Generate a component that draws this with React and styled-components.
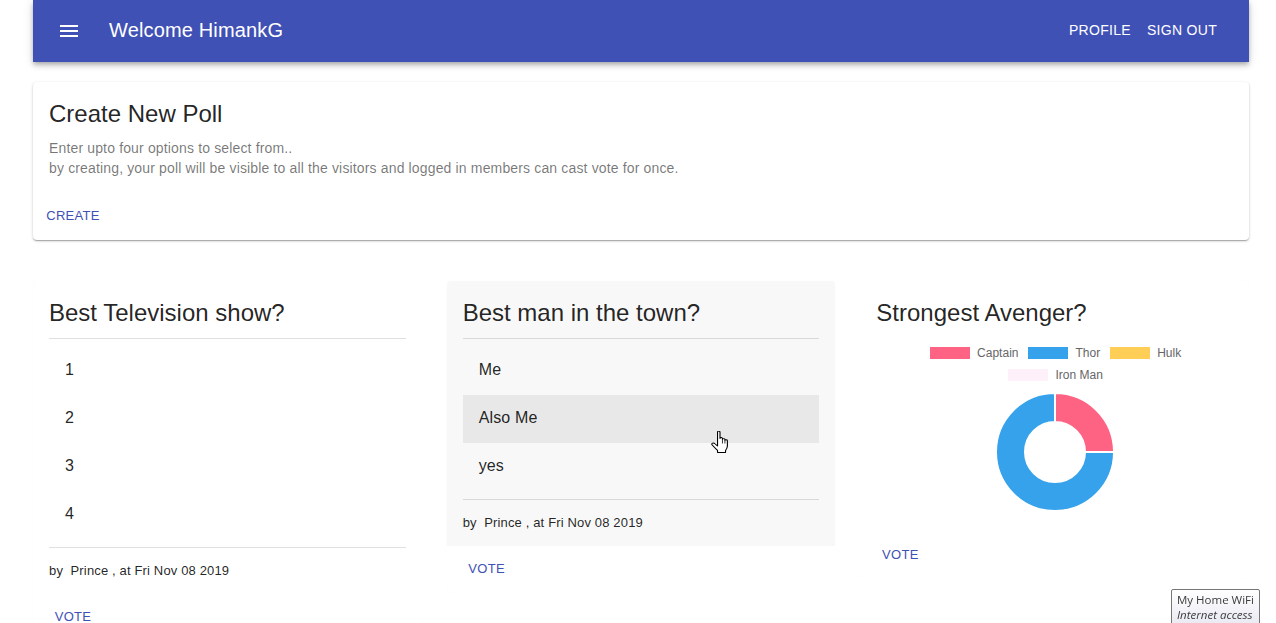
import React from 'react';
import styled, { createGlobalStyle } from 'styled-components';

const GlobalStyle = createGlobalStyle`
  html, body {
    margin: 0;
    padding: 0;
    overflow: hidden;
    background: #fff;
    font-family: "Liberation Sans", Arial, sans-serif;
    color: rgba(0, 0, 0, 0.87);
  }
  * { box-sizing: border-box; }
`;

const Page = styled.div`
  width: 1216px;
  margin-left: 33px;
`;

const AppBar = styled.header`
  height: 62px;
  background: #3f51b5;
  color: #fff;
  display: flex;
  align-items: center;
  padding: 0 24px;
  box-shadow: 0px 2px 4px -1px rgba(0,0,0,0.2), 0px 4px 5px 0px rgba(0,0,0,0.14), 0px 1px 10px 0px rgba(0,0,0,0.12);
  position: relative;
  z-index: 2;
`;

const MenuButton = styled.button`
  border: 0;
  background: none;
  color: inherit;
  padding: 0;
  margin-right: 28px;
  width: 24px;
  height: 24px;
  display: flex;
`;

const BarTitle = styled.h1`
  margin: 0 0 2px;
  flex: 1;
  font-size: 20px;
  font-weight: 400;
  line-height: 1.6;
  letter-spacing: 0.15px;
`;

const NavButton = styled.button`
  border: 0;
  background: none;
  color: #fff;
  font-family: inherit;
  font-size: 14px;
  letter-spacing: 0.3px;
  text-transform: uppercase;
  padding: 6px 8px;
  line-height: 1.75;
  margin-bottom: 2px;
`;

const Card = styled.div`
  background: #fff;
  border-radius: 4px;
  overflow: hidden;
  box-shadow: ${(p) =>
    p.$raised
      ? '0px 1px 3px 0px rgba(0,0,0,0.2), 0px 1px 1px 0px rgba(0,0,0,0.14), 0px 2px 1px -1px rgba(0,0,0,0.12)'
      : '0 0 1px rgba(0,0,0,0.05)'};
`;

const CreateCard = styled(Card)`
  margin-top: 20px;
`;

const ActionArea = styled.div`
  background: ${(p) => (p.$hovered ? '#f8f8f8' : 'transparent')};
`;

const Content = styled.div`
  padding: 16px 16px 15px;
`;

const Title = styled.h2`
  margin: 0 0 ${(p) => (p.$gutter ? 9 : 8)}px;
  font-size: 24px;
  font-weight: 400;
  line-height: 32px;
`;

const Hint = styled.p`
  margin: 0;
  font-size: 14px;
  line-height: 20px;
  letter-spacing: 0.15px;
  color: rgba(0, 0, 0, 0.54);
`;

const Actions = styled.div`
  padding: 8px;
  display: flex;
`;

const TextButton = styled.button`
  border: 0;
  background: none;
  display: inline-flex;
  justify-content: center;
  min-width: 64px;
  padding: 4px 5px;
  font-family: inherit;
  font-size: 13px;
  line-height: 1.75;
  letter-spacing: 0.3px;
  text-transform: uppercase;
  color: #3f51b5;
`;

const PollGrid = styled.div`
  margin-top: 41px;
  display: grid;
  grid-template-columns: repeat(3, 1fr);
  column-gap: 25px;
  align-items: start;
`;

const Divider = styled.hr`
  margin: 0;
  border: 0;
  height: 1px;
  background: rgba(0, 0, 0, 0.12);
`;

const OptionList = styled.ul`
  list-style: none;
  margin: 0;
  padding: 8px 0;
`;

const Option = styled.li`
  position: relative;
  height: 48px;
  display: flex;
  align-items: center;
  padding: 0 16px 2px;
  font-size: 16px;
  letter-spacing: 0.15px;
  background: ${(p) => (p.$hovered ? '#e8e8e8' : 'transparent')};
`;

const Byline = styled.div`
  margin-top: 15px;
  font-size: 13px;
  line-height: 16px;
  letter-spacing: 0.15px;
  white-space: pre;
`;

const Chart = styled.div`
  padding: 9px 0 5px;
  display: flex;
  flex-direction: column;
  align-items: center;
`;

const Legend = styled.div`
  width: 270px;
  display: flex;
  flex-wrap: wrap;
  justify-content: center;
  column-gap: 10px;
  row-gap: 10px;
  padding-left: 2px;
`;

const LegendItem = styled.div`
  display: flex;
  align-items: center;
  font-size: 12px;
  line-height: 12px;
  color: #666;
`;

const Swatch = styled.span`
  width: 40px;
  height: 12px;
  margin-right: 7px;
  background: ${(p) => p.$color};
`;

const Donut = styled.svg`
  margin-top: 11px;
  display: block;
`;

const Cursor = styled.svg`
  position: absolute;
  left: 248px;
  top: 36px;
  z-index: 1;
`;

const WifiTip = styled.div`
  position: fixed;
  left: 1171px;
  top: 589px;
  width: 89px;
  height: 44px;
  padding: 2px 5px;
  border: 1px solid #767676;
  border-radius: 2px;
  background: linear-gradient(#ffffff, #e4e5f0);
  font-family: "Open Sans", "DejaVu Sans", sans-serif;
  font-size: 11.5px;
  line-height: 15px;
  color: #3c3c3c;
  white-space: nowrap;
  em { font-style: italic; }
`;

const MenuIcon = () => (
  <svg width="24" height="24" viewBox="0 0 24 24" fill="currentColor">
    <path d="M3 18h18v-2H3v2zm0-5h18v-2H3v2zm0-7v2h18V6H3z" />
  </svg>
);

const HandCursor = () => (
  <Cursor width="17" height="22" viewBox="0.2 0 13.8 22" preserveAspectRatio="none">
    <path
      d="M5.5 1.2C5.5 0.5 6 0.1 6.5 0.1C7.1 0.1 7.5 0.5 7.5 1.2V7.6C7.5 7 7.9 6.5 8.5 6.5C9.1 6.5 9.5 7 9.5 7.6V8.6C9.5 8 9.9 7.6 10.5 7.6C11.1 7.6 11.5 8 11.5 8.6V9.6C11.5 9.1 11.9 8.7 12.5 8.7C13.1 8.7 13.5 9.1 13.5 9.7V15C13.5 17 12.7 18.4 12 19.4V21.5H5.5V19.4C4.5 18.4 2.6 16 1.2 14.1C0.6 13.3 0.8 12.4 1.5 12.1C2.2 11.8 2.8 12.1 3.4 12.8L5.5 15Z"
      fill="#fff"
      stroke="#000"
      strokeWidth="0.9"
      strokeLinejoin="round"
    />
    <path d="M9.5 8.6V12.5M11.5 9.6V12.5" stroke="#000" strokeWidth="0.7" />
  </Cursor>
);

const polls = [
  { title: 'Best Television show?', options: ['1', '2', '3', '4'], by: 'Prince' },
  { title: 'Best man in the town?', options: ['Me', 'Also Me', 'yes'], by: 'Prince', hovered: 1 },
];

const chartData = [
  { label: 'Captain', color: '#ff6384' },
  { label: 'Thor', color: '#36a2eb' },
  { label: 'Hulk', color: '#ffce56' },
  { label: 'Iron Man', color: '#fdf0f8' },
];

function OptionPoll({ poll }) {
  const active = poll.hovered !== undefined;
  return (
    <Card>
      <ActionArea $hovered={active}>
        <Content>
          <Title $gutter>{poll.title}</Title>
          <Divider />
          <OptionList>
            {poll.options.map((opt, idx) => (
              <Option key={idx} $hovered={poll.hovered === idx}>
                {opt}
                {poll.hovered === idx && <HandCursor />}
              </Option>
            ))}
          </OptionList>
          <Divider />
          <Byline>{`by  ${poll.by} , at Fri Nov 08 2019`}</Byline>
        </Content>
      </ActionArea>
      <Actions>
        <TextButton>Vote</TextButton>
      </Actions>
    </Card>
  );
}

function ChartPoll() {
  return (
    <Card>
      <Content>
        <Title $gutter>Strongest Avenger?</Title>
        <Chart>
          <Legend>
            {chartData.map((d) => (
              <LegendItem key={d.label}>
                <Swatch $color={d.color} />
                {d.label}
              </LegendItem>
            ))}
          </Legend>
          <Donut width="120" height="120" viewBox="0 0 120 120">
            <path
              d="M60 1A59 59 0 0 1 119 60L90 60A30 30 0 0 0 60 30Z"
              fill="#ff6384"
              stroke="#fff"
              strokeWidth="2"
            />
            <path
              d="M119 60A59 59 0 1 1 60 1L60 30A30 30 0 1 0 90 60Z"
              fill="#36a2eb"
              stroke="#fff"
              strokeWidth="2"
            />
          </Donut>
        </Chart>
      </Content>
      <Actions>
        <TextButton>Vote</TextButton>
      </Actions>
    </Card>
  );
}

export default function App() {
  return (
    <>
      <GlobalStyle />
      <Page>
        <AppBar>
          <MenuButton aria-label="menu">
            <MenuIcon />
          </MenuButton>
          <BarTitle>Welcome HimankG</BarTitle>
          <NavButton>Profile</NavButton>
          <NavButton>Sign Out</NavButton>
        </AppBar>

        <CreateCard $raised>
          <Content>
            <Title>Create New Poll</Title>
            <Hint>Enter upto four options to select from..</Hint>
            <Hint>by creating, your poll will be visible to all the visitors and logged in members can cast vote for once.</Hint>
          </Content>
          <Actions>
            <TextButton>Create</TextButton>
          </Actions>
        </CreateCard>

        <PollGrid>
          {polls.map((poll, idx) => (
            <OptionPoll key={idx} poll={poll} />
          ))}
          <ChartPoll />
        </PollGrid>
      </Page>
      <WifiTip>
        My Home WiFi
        <br />
        <em>Internet access</em>
      </WifiTip>
    </>
  );
}
